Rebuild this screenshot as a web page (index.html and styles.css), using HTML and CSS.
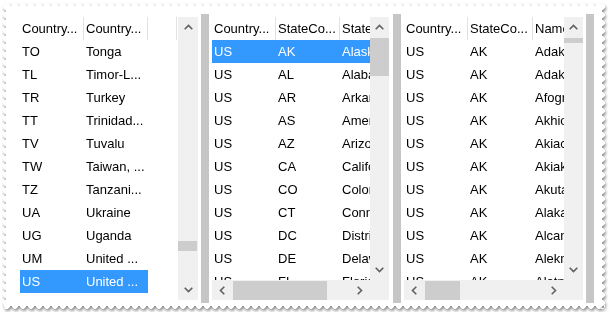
FILE: index.html
```html
<!DOCTYPE html>
<html lang="en">
<head>
    <meta charset="UTF-8">
    <title>Linked grids</title>
    <link rel="stylesheet" href="styles.css">
</head>
<body>
<div class="shadow">
  <div class="frame">

    <!-- countries -->
    <div class="panel">
      <div class="grid grid-v">
        <div class="view">
          <div class="head cols-left">
            <div class="hcell">Country...</div>
            <div class="hcell">Country...</div>
            <div class="hcell"></div>
          </div>
          <div class="row short"><div class="cell">TO</div><div class="cell">Tonga</div></div>
          <div class="row short"><div class="cell">TL</div><div class="cell">Timor-L...</div></div>
          <div class="row short"><div class="cell">TR</div><div class="cell">Turkey</div></div>
          <div class="row short"><div class="cell">TT</div><div class="cell">Trinidad...</div></div>
          <div class="row short"><div class="cell">TV</div><div class="cell">Tuvalu</div></div>
          <div class="row short"><div class="cell">TW</div><div class="cell">Taiwan, ...</div></div>
          <div class="row short"><div class="cell">TZ</div><div class="cell">Tanzani...</div></div>
          <div class="row short"><div class="cell">UA</div><div class="cell">Ukraine</div></div>
          <div class="row short"><div class="cell">UG</div><div class="cell">Uganda</div></div>
          <div class="row short"><div class="cell">UM</div><div class="cell">United ...</div></div>
          <div class="row short sel"><div class="cell">US</div><div class="cell">United ...</div></div>
          <div class="row short"><div class="cell">UY</div><div class="cell">Uruguay</div></div>
        </div>
        <div class="vscroll">
          <div class="sbtn"><svg width="9" height="6" viewBox="0 0 9 6"><path d="M0.7 5.3 4.5 1.5 8.3 5.3" fill="none" stroke="#606060" stroke-width="1.6"/></svg></div>
          <div class="track"><div class="vthumb thumb-left"></div></div>
          <div class="sbtn"><svg width="9" height="6" viewBox="0 0 9 6"><path d="M0.7 0.7 4.5 4.5 8.3 0.7" fill="none" stroke="#606060" stroke-width="1.6"/></svg></div>
        </div>
      </div>
    </div>
    <div class="splitter"></div>

    <!-- states -->
    <div class="panel panel-mid">
      <div class="grid grid-vh">
        <div class="view">
          <div class="head cols-mid">
            <div class="hcell">Country...</div>
            <div class="hcell">StateCo...</div>
            <div class="hcell last">StateName</div>
          </div>
          <div class="row cols-mid sel"><div class="cell">US</div><div class="cell">AK</div><div class="cell">Alaska</div></div>
          <div class="row cols-mid"><div class="cell">US</div><div class="cell">AL</div><div class="cell">Alabama</div></div>
          <div class="row cols-mid"><div class="cell">US</div><div class="cell">AR</div><div class="cell">Arkansas</div></div>
          <div class="row cols-mid"><div class="cell">US</div><div class="cell">AS</div><div class="cell">American Samoa</div></div>
          <div class="row cols-mid"><div class="cell">US</div><div class="cell">AZ</div><div class="cell">Arizona</div></div>
          <div class="row cols-mid"><div class="cell">US</div><div class="cell">CA</div><div class="cell">California</div></div>
          <div class="row cols-mid"><div class="cell">US</div><div class="cell">CO</div><div class="cell">Colorado</div></div>
          <div class="row cols-mid"><div class="cell">US</div><div class="cell">CT</div><div class="cell">Connecticut</div></div>
          <div class="row cols-mid"><div class="cell">US</div><div class="cell">DC</div><div class="cell">District of Columbia</div></div>
          <div class="row cols-mid"><div class="cell">US</div><div class="cell">DE</div><div class="cell">Delaware</div></div>
          <div class="row cols-mid"><div class="cell">US</div><div class="cell">FL</div><div class="cell">Florida</div></div>
        </div>
        <div class="vscroll">
          <div class="sbtn"><svg width="9" height="6" viewBox="0 0 9 6"><path d="M0.7 5.3 4.5 1.5 8.3 5.3" fill="none" stroke="#606060" stroke-width="1.6"/></svg></div>
          <div class="track"><div class="vthumb thumb-mid"></div></div>
          <div class="sbtn"><svg width="9" height="6" viewBox="0 0 9 6"><path d="M0.7 0.7 4.5 4.5 8.3 0.7" fill="none" stroke="#606060" stroke-width="1.6"/></svg></div>
        </div>
        <div class="hscroll">
          <div class="sbtn"><svg width="6" height="9" viewBox="0 0 6 9"><path d="M5.3 0.7 1.5 4.5 5.3 8.3" fill="none" stroke="#606060" stroke-width="1.6"/></svg></div>
          <div class="track"><div class="hthumb hthumb-mid"></div></div>
          <div class="sbtn"><svg width="6" height="9" viewBox="0 0 6 9"><path d="M0.7 0.7 4.5 4.5 0.7 8.3" fill="none" stroke="#606060" stroke-width="1.6"/></svg></div>
        </div>
        <div class="corner"></div>
      </div>
    </div>
    <div class="splitter"></div>

    <!-- cities -->
    <div class="panel">
      <div class="grid grid-vh">
        <div class="view">
          <div class="head cols-right">
            <div class="hcell">Country...</div>
            <div class="hcell">StateCo...</div>
            <div class="hcell last">Name</div>
          </div>
          <div class="row cols-right"><div class="cell">US</div><div class="cell">AK</div><div class="cell">Adak</div></div>
          <div class="row cols-right"><div class="cell">US</div><div class="cell">AK</div><div class="cell">Adak</div></div>
          <div class="row cols-right"><div class="cell">US</div><div class="cell">AK</div><div class="cell">Afognak</div></div>
          <div class="row cols-right"><div class="cell">US</div><div class="cell">AK</div><div class="cell">Akhiok</div></div>
          <div class="row cols-right"><div class="cell">US</div><div class="cell">AK</div><div class="cell">Akiachak</div></div>
          <div class="row cols-right"><div class="cell">US</div><div class="cell">AK</div><div class="cell">Akiak</div></div>
          <div class="row cols-right"><div class="cell">US</div><div class="cell">AK</div><div class="cell">Akutan</div></div>
          <div class="row cols-right"><div class="cell">US</div><div class="cell">AK</div><div class="cell">Alakanuk</div></div>
          <div class="row cols-right"><div class="cell">US</div><div class="cell">AK</div><div class="cell">Alcan</div></div>
          <div class="row cols-right"><div class="cell">US</div><div class="cell">AK</div><div class="cell">Aleknagik</div></div>
          <div class="row cols-right"><div class="cell">US</div><div class="cell">AK</div><div class="cell">Alatna</div></div>
        </div>
        <div class="vscroll">
          <div class="sbtn"><svg width="9" height="6" viewBox="0 0 9 6"><path d="M0.7 5.3 4.5 1.5 8.3 5.3" fill="none" stroke="#606060" stroke-width="1.6"/></svg></div>
          <div class="track"><div class="vthumb thumb-right"></div></div>
          <div class="sbtn"><svg width="9" height="6" viewBox="0 0 9 6"><path d="M0.7 0.7 4.5 4.5 8.3 0.7" fill="none" stroke="#606060" stroke-width="1.6"/></svg></div>
        </div>
        <div class="hscroll">
          <div class="sbtn"><svg width="6" height="9" viewBox="0 0 6 9"><path d="M5.3 0.7 1.5 4.5 5.3 8.3" fill="none" stroke="#606060" stroke-width="1.6"/></svg></div>
          <div class="track"><div class="hthumb hthumb-right"></div></div>
          <div class="sbtn"><svg width="6" height="9" viewBox="0 0 6 9"><path d="M0.7 0.7 4.5 4.5 0.7 8.3" fill="none" stroke="#606060" stroke-width="1.6"/></svg></div>
        </div>
        <div class="corner"></div>
      </div>
    </div>
    <div class="splitter"></div>

  </div>
</div>
</body>
</html>
```

FILE: styles.css
```css
* {
    box-sizing: border-box;
}
body {
    margin: 0;
    padding: 3px;
    background-color: #fff;
    font-family: "Liberation Sans", Arial, sans-serif;
    font-size: 13px;
    color: #000;
}

/* torn-paper frame */
.shadow {
    width: 602px;
    filter: drop-shadow(1px 2px 1.5px rgba(0, 0, 0, 0.45));
}
.frame {
    width: 602px;
    height: 306px;
    background-color: #fff;
    display: flex;
    padding: 11px 11px 6px 14px;
    -webkit-mask:
        linear-gradient(#000 0 0) center / calc(100% - 6px) calc(100% - 6px) no-repeat,
        radial-gradient(circle 3px, #000 92%, transparent) left top / 8px 6px repeat-x,
        radial-gradient(circle 3px, #000 92%, transparent) left bottom / 8px 6px repeat-x,
        radial-gradient(circle 3px, #000 92%, transparent) left top / 6px 8px repeat-y,
        radial-gradient(circle 3px, #000 92%, transparent) right top / 6px 8px repeat-y;
    mask:
        linear-gradient(#000 0 0) center / calc(100% - 6px) calc(100% - 6px) no-repeat,
        radial-gradient(circle 3px, #000 92%, transparent) left top / 8px 6px repeat-x,
        radial-gradient(circle 3px, #000 92%, transparent) left bottom / 8px 6px repeat-x,
        radial-gradient(circle 3px, #000 92%, transparent) left top / 6px 8px repeat-y,
        radial-gradient(circle 3px, #000 92%, transparent) right top / 6px 8px repeat-y;
}

.panel {
    width: 184px;
    padding: 3px;
    display: flex;
}
.panel:nth-child(5) {
    width: 185px;
}
.panel-mid {
    padding-right: 4px;
}
.splitter {
    width: 8px;
    background-color: #c6c6c6;
}

/* grid + scrollbars */
.grid {
    flex: 1;
    display: grid;
    min-width: 0;
}
.grid-v {
    grid-template-columns: 1fr 20px;
}
.grid-vh {
    grid-template-columns: 1fr 19px;
    grid-template-rows: 1fr 20px;
}
.view {
    overflow: hidden;
    min-width: 0;
}

.head,
.row {
    display: grid;
    height: 23px;
    line-height: 23px;
}
.cols-left {
    grid-template-columns: 64px 64px 29px;
}
.cols-mid {
    grid-template-columns: 64px 64px 1fr;
}
.cols-right {
    grid-template-columns: 64px 65px 1fr;
}
.short {
    width: 128px;
    grid-template-columns: 64px 64px;
}
.hcell {
    padding-left: 2px;
    border-right: 1px solid #e2e2e2;
    white-space: nowrap;
    overflow: hidden;
}
.hcell.last {
    border-right: none;
}
.cell {
    padding-left: 2px;
    white-space: nowrap;
    overflow: hidden;
}
.row.sel {
    background-color: #3399ff;
    color: #fff;
}

.vscroll {
    display: flex;
    flex-direction: column;
    background-color: #f0f0f0;
}
.vscroll .sbtn {
    height: 20px;
}
.vscroll .track {
    flex: 1;
}
.hscroll {
    display: flex;
    background-color: #f0f0f0;
}
.hscroll .sbtn {
    width: 20px;
}
.hscroll .track {
    flex: 1;
}
.sbtn {
    display: flex;
    justify-content: center;
    align-items: center;
}
.corner {
    background-color: #f0f0f0;
}

.vthumb {
    background-color: #cdcdcd;
    margin-right: 1px;
}
.thumb-left {
    margin-top: 204px;
    height: 10px;
}
.thumb-mid {
    margin-top: 1px;
    height: 38px;
    margin-right: 0;
}
.thumb-right {
    margin-top: 1px;
    height: 5px;
    margin-right: 0;
}
.hthumb {
    height: 19px;
    margin-top: 1px;
    background-color: #cdcdcd;
}
.hthumb-mid {
    margin-left: 1px;
    width: 94px;
}
.hthumb-right {
    margin-left: 1px;
    width: 35px;
}
```
